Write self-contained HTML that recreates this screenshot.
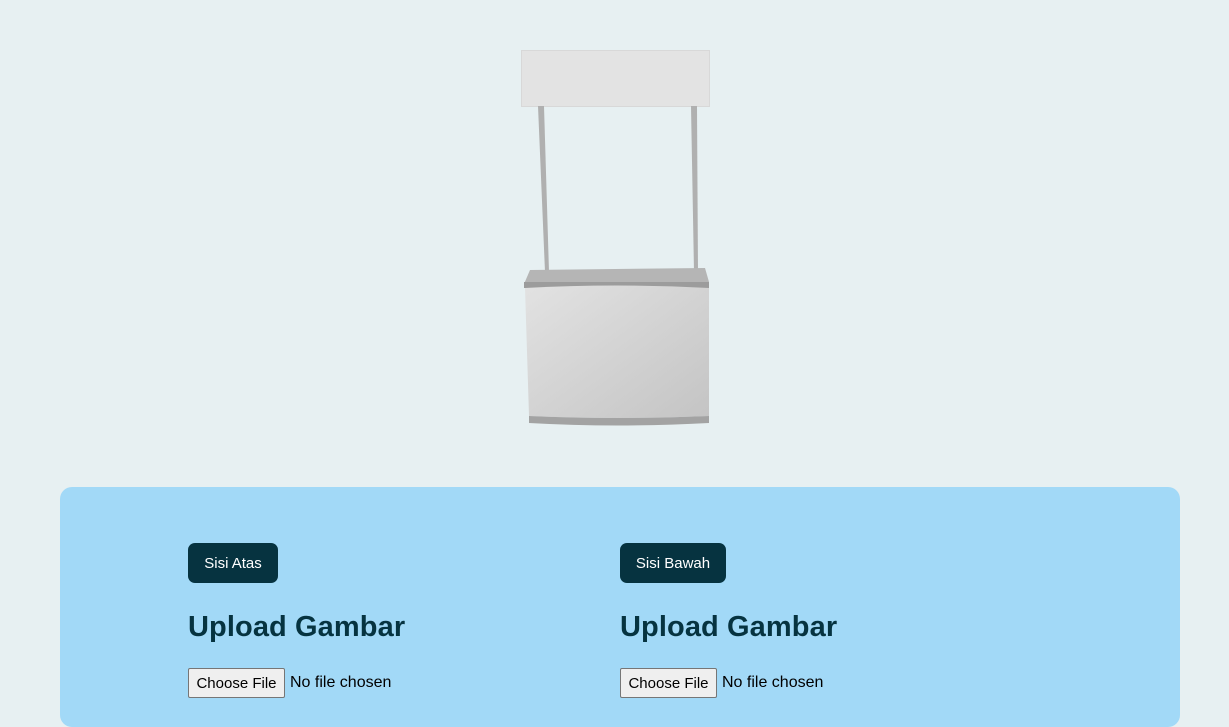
<!DOCTYPE html>
<html><head><style>
body{margin:0;width:1229px;height:707px;background:#e7f0f2;overflow:hidden;position:relative;font-family:"Liberation Sans",sans-serif}
.panel{position:absolute;left:60px;top:487px;width:1120px;height:240px;background:#a2d9f7;border-radius:12px}
.btn{position:absolute;top:543px;height:40px;background:#063340;color:#fff;border-radius:7px;font-size:15px;line-height:41px;text-align:center}
h2{position:absolute;top:611px;margin:0;font-size:29px;font-weight:bold;color:#063340;letter-spacing:0.1px}
.fb{position:absolute;top:668px;width:97px;height:30px;background:#efefef;border:1px solid #767676;border-radius:2px;font-size:15px;line-height:29px;text-align:center;color:#000;box-sizing:border-box}
.nf{position:absolute;top:674px;font-size:16px;color:#000}
</style></head><body>
<svg style="position:absolute;left:0;top:0" width="1229" height="470">
<defs><linearGradient id="g" x1="0" y1="0" x2="1" y2="1"><stop offset="0" stop-color="#e2e2e2"/><stop offset="1" stop-color="#c4c4c4"/></linearGradient></defs>
<rect x="521.5" y="50.5" width="188" height="56" fill="#e3e3e3" stroke="#d8d8d8"/>
<polygon points="538,106 544,106 549,272 545,272" fill="#b0b0b0"/>
<polygon points="691,106 697,106 698,272 694,272" fill="#b0b0b0"/>
<polygon points="530,270 705,268 709,282 524,284" fill="#b5b5b5"/>
<rect x="524" y="282" width="185" height="6" fill="#9c9c9c"/>
<path d="M525,288 Q617,283 709,288 L709,416 Q617,420 529,416 Z" fill="url(#g)"/>
<path d="M529,416 Q617,420 709,416 L709,423 Q617,428 529,423 Z" fill="#a3a3a3"/>
</svg>
<div class="panel"></div>
<div class="btn" style="left:188px;width:90px">Sisi Atas</div>
<div class="btn" style="left:620px;width:106px">Sisi Bawah</div>
<h2 style="left:188px">Upload Gambar</h2>
<h2 style="left:620px">Upload Gambar</h2>
<div class="fb" style="left:188px">Choose File</div>
<div class="nf" style="left:290px">No file chosen</div>
<div class="fb" style="left:620px">Choose File</div>
<div class="nf" style="left:722px">No file chosen</div>
</body></html>
